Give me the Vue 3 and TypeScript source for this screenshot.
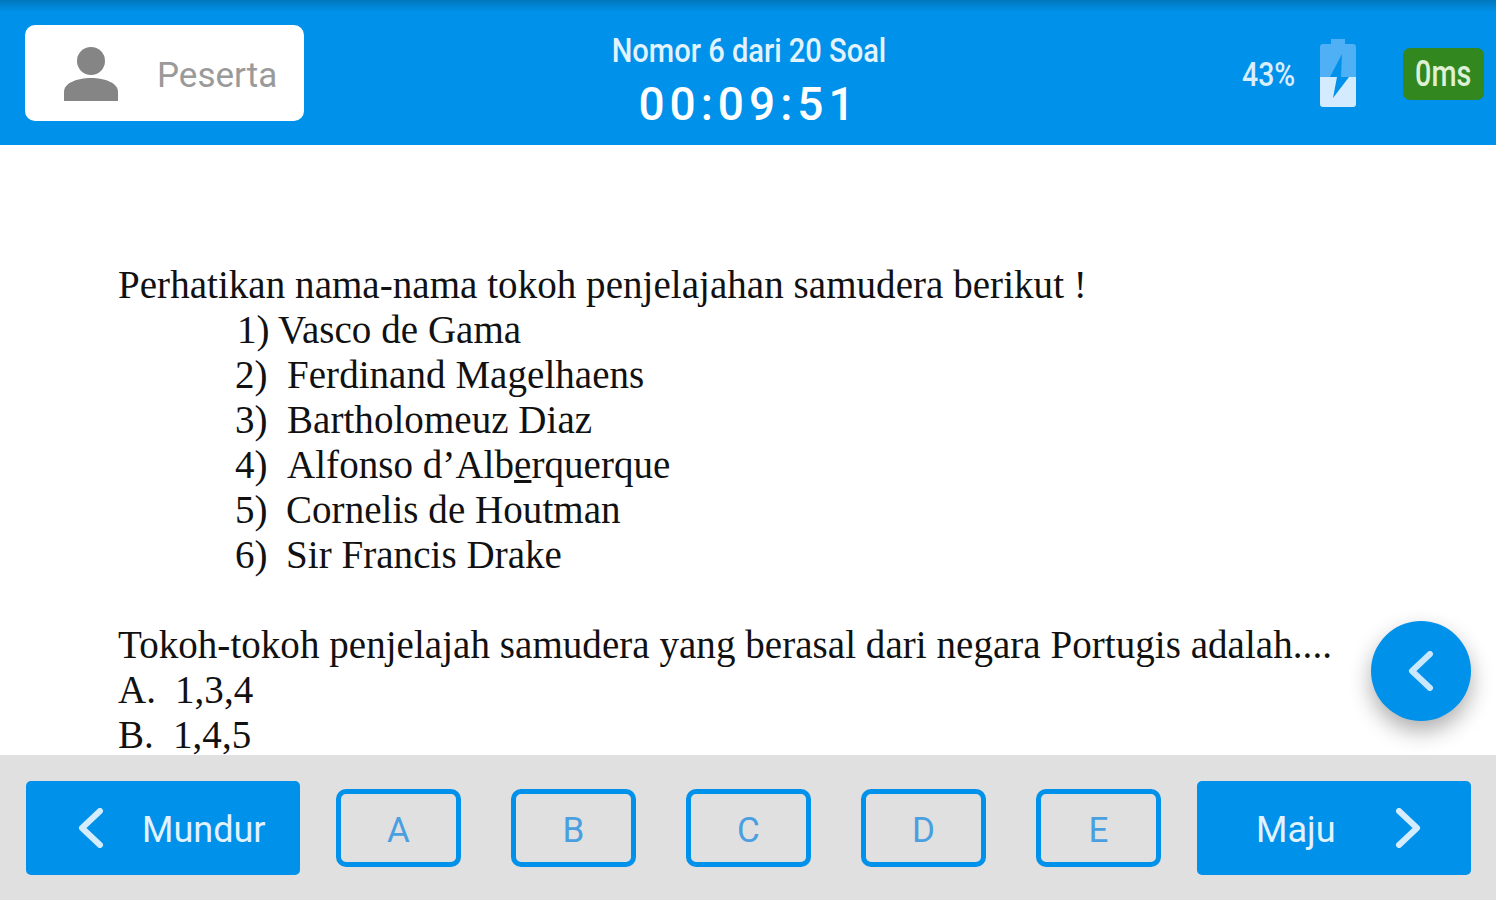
<template>
  <div class="screen">
    <header class="topbar">
      <div class="user-card">
        <svg class="user-icon" viewBox="0 0 54 54" width="54" height="54">
          <circle cx="27" cy="14" r="14" fill="#858585" />
          <path d="M0 54V45C0 36 13 31 27 31S54 36 54 45V54Z" fill="#858585" />
        </svg>
        <span class="user-name">Peserta</span>
      </div>
      <div class="exam-info">
        <div class="exam-number">Nomor {{ current }} dari {{ total }} Soal</div>
        <div class="exam-timer">00:09:51</div>
      </div>
      <div class="status">
        <span class="battery-text">43%</span>
        <svg class="battery" viewBox="0 0 36 68" width="36" height="68">
          <path d="M11 0H25V5H33Q36 5 36 8V38H0V8Q0 5 3 5H11Z" fill="#4fb0f6" />
          <path d="M0 38H36V65Q36 68 33 68H3Q0 68 0 65Z" fill="#d3ebfd" />
          <path d="M22 15L10 38H17L13 59L29 38H21Z" fill="#0091ea" />
        </svg>
        <span class="ping"><span class="ping-text">0ms</span></span>
      </div>
    </header>

    <main class="question">
      <p>Perhatikan nama-nama tokoh penjelajahan samudera berikut !</p>
      <ol class="names">
        <li v-for="item in names" :key="item.no" :class="'name-' + item.no">
          <span class="no">{{ item.no }})</span>
          <span v-if="item.no !== 4">{{ item.name }}</span>
          <span v-else>Alfonso d’Alb<u>e</u>rquerque</span>
        </li>
      </ol>
      <p class="ask">Tokoh-tokoh penjelajah samudera yang berasal dari negara Portugis adalah....</p>
      <p v-for="opt in options" :key="opt.key" class="option">
        <span class="opt-key" :class="'opt-' + opt.key">{{ opt.key }}.</span>{{ opt.text }}
      </p>
      <button class="fab" type="button">
        <svg viewBox="0 0 30 40" width="30" height="40" fill="none" stroke="#c9e7fd" stroke-width="6" stroke-linecap="round" stroke-linejoin="round">
          <path d="M24 3L6 20L24 37" />
        </svg>
      </button>
    </main>

    <footer class="bottombar">
      <button class="nav" type="button">
        <svg class="chevron" viewBox="0 0 30 40" width="30" height="40" fill="none" stroke="#d5ecfd" stroke-width="6" stroke-linecap="round" stroke-linejoin="round">
          <path d="M24 3L6 20L24 37" />
        </svg>
        <span class="nav-label prev-label">Mundur</span>
      </button>
      <div class="answers">
        <button v-for="a in answers" :key="a" class="answer" type="button">{{ a }}</button>
      </div>
      <button class="nav next" type="button">
        <span class="nav-label next-label">Maju</span>
        <svg class="chevron" viewBox="0 0 30 40" width="30" height="40" fill="none" stroke="#d5ecfd" stroke-width="6" stroke-linecap="round" stroke-linejoin="round">
          <path d="M6 3L24 20L6 37" />
        </svg>
      </button>
    </footer>
  </div>
</template>

<script setup lang="ts">
const current = 6
const total = 20

const names = [
  { no: 1, name: "Vasco de Gama" },
  { no: 2, name: "Ferdinand Magelhaens" },
  { no: 3, name: "Bartholomeuz Diaz" },
  { no: 4, name: "Alfonso d’Alberquerque" },
  { no: 5, name: "Cornelis de Houtman" },
  { no: 6, name: "Sir Francis Drake" },
]

const options = [
  { key: "A", text: "1,3,4" },
  { key: "B", text: "1,4,5" },
]

const answers = ["A", "B", "C", "D", "E"]
</script>

<style scoped>
.screen {
  width: 1496px;
  height: 900px;
  display: flex;
  flex-direction: column;
  overflow: hidden;
  background: #fff;
  font-family: Roboto, sans-serif;
}

.topbar {
  height: 145px;
  flex: none;
  box-sizing: border-box;
  padding: 25px 12px 0 25px;
  display: grid;
  grid-template-columns: 279px 1fr 242px;
  background: linear-gradient(#0277bd 0, #0091ea 12px);
  color: #fff;
}

.user-card {
  height: 96px;
  display: flex;
  align-items: center;
  box-sizing: border-box;
  padding-left: 39px;
  gap: 39px;
  background: #fff;
  border-radius: 10px;
}

.user-icon {
  margin-top: 2px;
}

.user-name {
  font-size: 35px;
  color: #9a9a9a;
  margin-top: 5px;
}

.exam-info {
  text-align: center;
  margin-left: -48px;
}

.exam-number {
  font-size: 34px;
  font-weight: 500;
  line-height: 50px;
  transform: scaleX(0.855);
  color: #e3f3fe;
}

.exam-timer {
  font-size: 46px;
  line-height: 58px;
  font-weight: 500;
  letter-spacing: 5px;
}

.status {
  display: flex;
  align-items: flex-start;
}

.battery-text {
  margin-top: 30px;
  font-size: 33px;
  font-weight: 500;
  line-height: 40px;
  transform: scaleX(0.86);
  transform-origin: left;
  color: #d9eefd;
  width: 78px;
}

.battery {
  margin-top: 14px;
  flex: none;
}

.ping {
  margin: 23px 0 0 47px;
  width: 81px;
  height: 52px;
  border-radius: 7px;
  background: #33871f;
  color: #def0d6;
  font-size: 36px;
  font-weight: 500;
  line-height: 52px;
  text-align: center;
}

.ping-text {
  display: inline-block;
  transform: scaleX(0.8);
}

.question {
  position: relative;
  flex: 1;
  min-height: 0;
  box-sizing: border-box;
  padding: 117px 0 0 118px;
  font-family: "Liberation Serif", serif;
  font-size: 39px;
  letter-spacing: 0.05px;
  line-height: 45px;
  color: #111;
}

.question p {
  margin: 0;
}

.names {
  list-style: none;
  margin: 0;
  padding: 0 0 0 117px;
}

.no {
  display: inline-block;
  width: 52px;
}

.name-1 {
  margin-left: 2px;
}

.name-1 .no {
  width: 41px;
}

.name-5 .no,
.name-6 .no {
  width: 51px;
}

.ask {
  margin-top: 45px !important;
}

.opt-key {
  display: inline-block;
  width: 57px;
}

.opt-B {
  width: 55px;
}

.fab {
  position: absolute;
  right: 25px;
  top: 476px;
  width: 100px;
  height: 100px;
  display: flex;
  align-items: center;
  justify-content: center;
  padding: 0;
  border: none;
  border-radius: 50%;
  background: #0091ea;
  box-shadow: 0 10px 22px rgba(0, 0, 0, 0.32);
}

.bottombar {
  height: 145px;
  flex: none;
  box-sizing: border-box;
  padding: 26px 25px 0 26px;
  display: flex;
  align-items: flex-start;
  background: #e0e0e0;
}

.nav {
  width: 274px;
  height: 94px;
  flex: none;
  display: flex;
  align-items: center;
  box-sizing: border-box;
  padding: 0 0 0 50px;
  border: none;
  border-radius: 5px;
  background: #0091ea;
  color: #e2f2fe;
  font-family: Roboto, sans-serif;
  font-size: 36px;
}

.chevron {
  flex: none;
}

.nav-label {
  margin-top: 4px;
}

.next {
  justify-content: space-between;
  padding: 0 48px 0 59px;
}

.prev-label {
  margin-left: 36px;
}

.answers {
  flex: 1;
  display: flex;
  justify-content: space-between;
  padding: 8px 36px 0;
}

.answer {
  width: 125px;
  height: 78px;
  box-sizing: border-box;
  padding: 4px 0 0;
  border: 5px solid #0091ea;
  border-radius: 10px;
  background: transparent;
  color: #4a9fe0;
  font-family: Roboto, sans-serif;
  font-size: 35px;
}
</style>

<style>
html,
body {
  margin: 0;
}
</style>
